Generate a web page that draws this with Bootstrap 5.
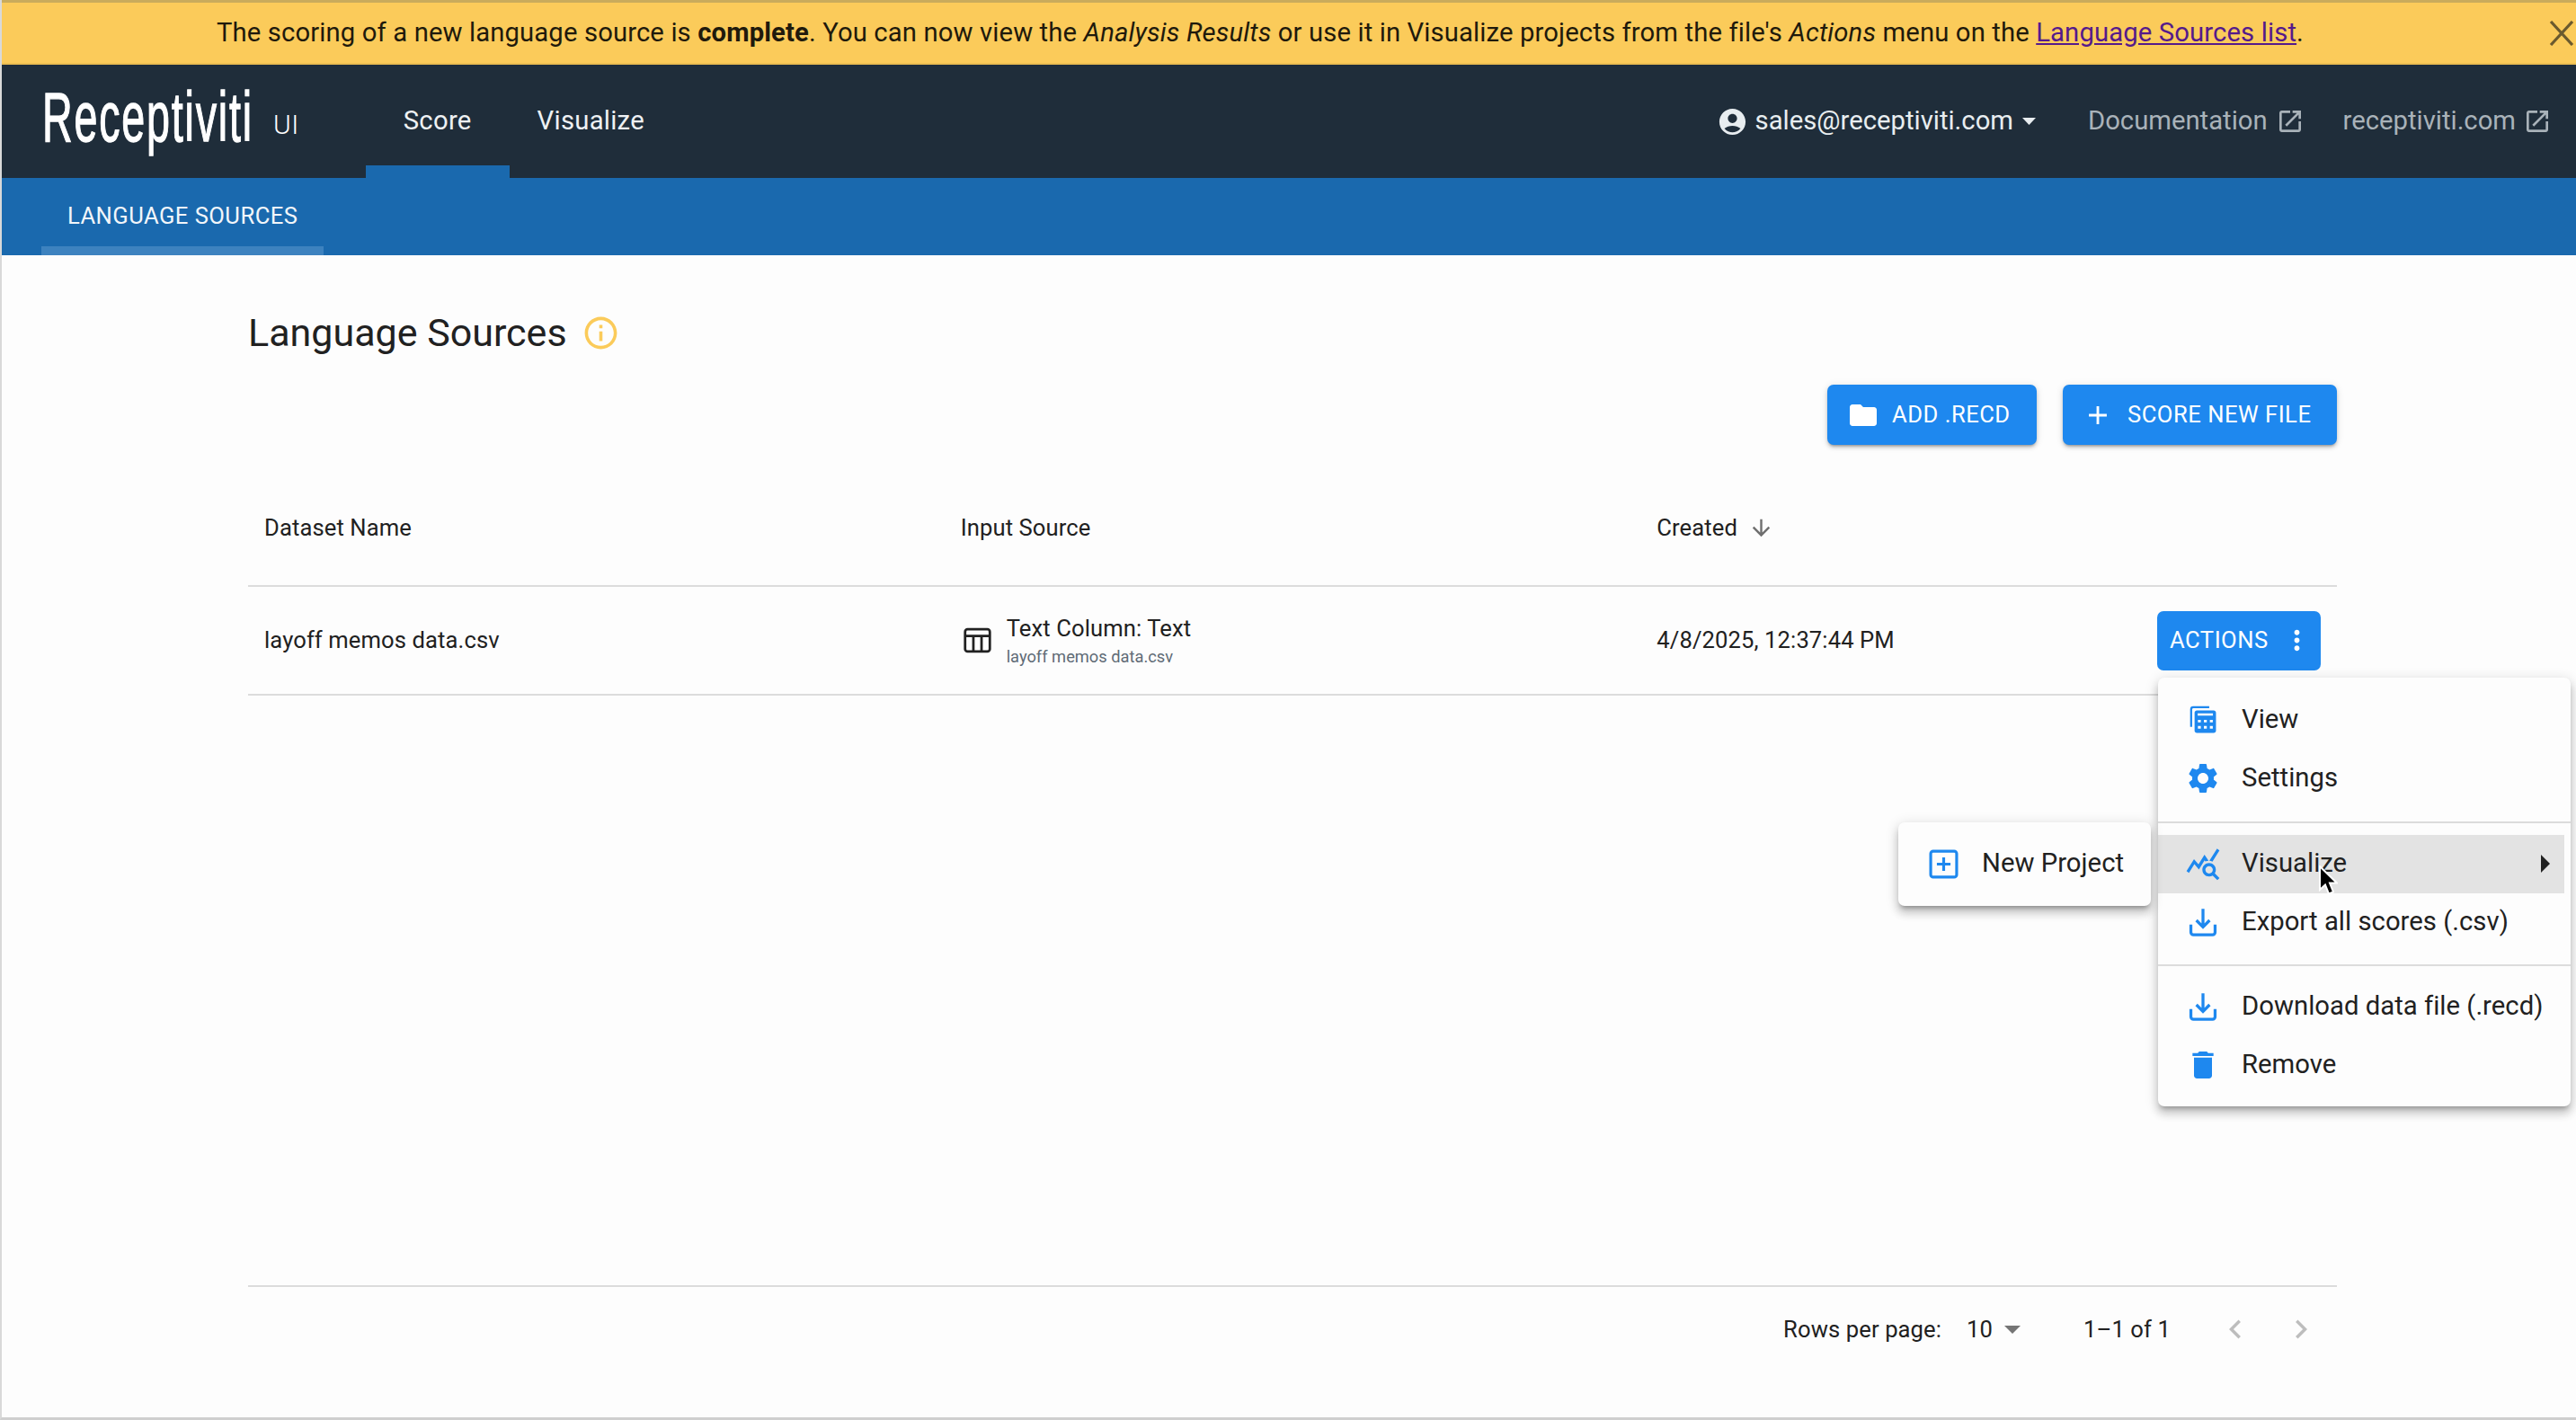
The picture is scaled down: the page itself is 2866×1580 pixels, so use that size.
<!doctype html>
<html lang="en">
<head>
<meta charset="utf-8">
<title>Language Sources</title>
<link href="https://cdn.jsdelivr.net/npm/bootstrap@5.3.0/dist/css/bootstrap.min.css" rel="stylesheet">
<style>
html,body{height:100%;}
body{font-family:Roboto,"Liberation Sans",sans-serif;background:#fdfdfd;color:#212121;font-size:25.6px;letter-spacing:.1px;width:2866px;height:1580px;overflow:hidden;display:flex;flex-direction:column;border-left:2px solid #d9d9d9;border-bottom:3px solid #cfcfcf;}
svg{fill:currentColor;flex:none;display:block;}
.rc-banner{height:72px;background:#fbcb5a;border-top:3px solid #c9ab5c;border-bottom:2px solid #ecbe52;font-size:29.25px;letter-spacing:.12px;color:#1f1a0c;margin-left:-2px;padding-right:62px;}
.rc-banner a{color:#551a8b;}
.rc-close{position:absolute;right:2px;top:20px;background:none;border:0;padding:0;color:#6b5a2e;}
.rc-navbar{height:126px;background:#1f2d3a;margin-left:-2px;padding:0;flex-wrap:nowrap;align-items:stretch;justify-content:flex-start;}
.rc-logo{margin-left:47px;width:237px;color:#fff;font-family:"Liberation Sans",sans-serif;font-size:77px;line-height:1;letter-spacing:3px;transform:scaleX(.605);transform-origin:left center;white-space:nowrap;-webkit-text-stroke:1.3px #fff;padding-bottom:10px;}
.rc-ui{font-size:30px;font-weight:300;color:#fff;margin-left:20px;margin-right:74px;padding-top:7px;letter-spacing:.5px;}
.rc-tab{font-size:29.25px;letter-spacing:.27px;color:#eef1f3;padding:0 30px;display:flex;align-items:center;text-decoration:none;}
.rc-tab-on{padding:0 42px;box-shadow:inset 0 -14px 0 #1a69ae;}
.rc-tab-alt{padding-left:31px;}
.rc-right{padding-right:27px;}
.rc-user{font-size:29.25px;letter-spacing:0;color:#e8edf0;}
.rc-caret{margin-left:10px;}
.rc-ext{font-size:29.25px;letter-spacing:0;color:#a9b2b9;text-decoration:none;}
.rc-ext-doc{margin-left:58px;}
.rc-ext-doc svg{margin-left:9px;}
.rc-ext-site{margin-left:43px;}
.rc-ext-site svg{margin-left:8px;}
.rc-subnav{height:86px;background:#1a69ae;margin-left:-2px;}
.rc-subtab{margin-left:46px;width:314px;padding-left:29px;color:#f2f6fa;font-size:25.6px;letter-spacing:.45px;box-shadow:inset 0 -10px 0 #3d82bf;padding-bottom:2px;display:flex;align-items:center;text-decoration:none;}
.rc-main{padding:60px 266px 0 274px;flex:1 1 auto;display:flex;flex-direction:column;min-height:0;}
.rc-title{font-size:43px;font-weight:400;line-height:52px;margin:0;letter-spacing:0;}
.rc-info{color:#fbcb5a;margin-left:16px;}
.rc-tools{margin-top:32px;gap:29px;}
.rc-primary{background:#1e88ef;border:0;color:#fff;font-size:25.6px;letter-spacing:.5px;border-radius:7px;height:67px;display:flex;align-items:center;text-transform:uppercase;box-shadow:0 3px 3px -2px rgba(0,0,0,.3),0 3px 4px rgba(0,0,0,.14),0 1px 8px rgba(0,0,0,.12);}
.rc-primary:hover,.rc-primary:active{background:#1e88ef;color:#fff;}
.rc-add{width:233px;padding:0 0 0 22px;}
.rc-add svg{margin-right:14px;}
.rc-score{width:305px;padding:0 0 0 22px;}
.rc-score svg{margin-right:16px;}
.rc-actbtn{width:182px;height:66px;padding:0 0 0 14px;box-shadow:none;}
.rc-actbtn svg{margin-left:14px;}
.rc-table{margin:27px 0 0;table-layout:fixed;--bs-table-bg:transparent;--bs-table-color:#212121;--bs-table-border-color:#dcdcdc;font-size:25.6px;}
.rc-table th{font-weight:400;height:130px;vertical-align:middle;padding:2px 18px 0;border-bottom-width:2px;}
.rc-table td{height:121px;vertical-align:middle;padding:0 18px;border-bottom-width:2px;}
.rc-created-arrow{color:#6f6f6f;margin-left:12px;}
.rc-srcicon{margin-right:16px;margin-left:2px;fill:none;stroke:#212121;stroke-width:2;}
.rc-srctext{padding-top:2px;}
.rc-src-main{line-height:31px;}
.rc-src-sub{font-size:18.3px;line-height:24px;margin-top:4px;color:#5f6b76;letter-spacing:0;}
.rc-menuanchor{position:relative;}
.rc-menu{position:absolute;display:block;left:1px;top:74px;width:459px;padding:15px 0 13px;margin:0;border:0;border-radius:7px;background:#fdfdfd;box-shadow:0 5px 5px -3px rgba(0,0,0,.25),0 8px 10px 1px rgba(0,0,0,.14),0 3px 14px 2px rgba(0,0,0,.12);z-index:10;}
.rc-submenu{position:absolute;display:block;left:-288px;top:235px;width:281px;padding:14px 0;margin:0;border:0;border-radius:7px;background:#fdfdfd;box-shadow:0 5px 5px -3px rgba(0,0,0,.3),0 8px 10px 1px rgba(0,0,0,.14),0 3px 14px 2px rgba(0,0,0,.12);}
.rc-item{height:65px;display:flex;align-items:center;padding:0 0 0 33px;font-size:29.25px;letter-spacing:.03px;color:#212121;background:none;}
.rc-item svg{color:#1e88ef;margin-right:26px;}
.rc-ico-lg{margin-left:-3px;}
.rc-item .rc-ico-lg{margin-right:23px;}
.rc-stroke{fill:none;stroke:currentColor;stroke-width:2.3;}
.rc-hover{background:#e3e3e3;margin-right:7px;width:auto;position:relative;}
.rc-hover:hover{background:#e3e3e3;}
.rc-div{margin:14px 0 13px;border-top:2px solid #dcdcdc;opacity:1;}
.rc-div-first{margin-top:15px;}
.rc-item .rc-arrow{position:absolute;right:16px;top:22px;margin:0;color:#212121;}
.rc-sub-item{height:65px;padding-left:34px;}
.rc-cursor{position:absolute;left:178px;top:34px;pointer-events:none;z-index:5;}
.rc-foot{margin-top:auto;height:147px;border-top:2px solid #dcdcdc;font-size:25.6px;padding-bottom:51px;}
.rc-muted{color:#bdbdbd;}
.rc-tri{color:#757575;margin-left:13px;}
.rc-foot-10{margin-left:28px;}
.rc-foot-range{margin-left:70px;}
.rc-prev{margin-left:51px;}
.rc-next{margin-left:31px;margin-right:19px;}
</style>
</head>
<body>
<div class="rc-banner position-relative d-flex align-items-center justify-content-center">
  <div>The scoring of a new language source is <b>complete</b>. You can now view the <i>Analysis Results</i> or use it in Visualize projects from the file's <i>Actions</i> menu on the <a href="#">Language Sources list</a>.</div>
  <button class="rc-close" type="button" aria-label="Close"><svg width="28" height="28" viewBox="0 0 28 28"><path d="M2 1l24 26M26 1L2 27" stroke="currentColor" stroke-width="3.2" fill="none"/></svg></button>
</div>
<nav class="navbar rc-navbar">
  <div class="rc-logo d-flex align-items-center">Receptiviti</div>
  <div class="rc-ui d-flex align-items-center">UI</div>
  <a class="rc-tab rc-tab-on" href="#">Score</a>
  <a class="rc-tab rc-tab-alt" href="#">Visualize</a>
  <div class="rc-right ms-auto d-flex align-items-center">
    <div class="rc-user d-flex align-items-center"><svg width="35" height="35" viewBox="0 0 24 24"><path d="M12 2C6.48 2 2 6.48 2 12s4.48 10 10 10 10-4.48 10-10S17.52 2 12 2zm0 4c1.93 0 3.5 1.57 3.5 3.5S13.93 13 12 13s-3.5-1.57-3.5-3.5S10.07 6 12 6zm0 14c-2.03 0-4.43-.82-6.14-2.88C7.55 15.8 9.68 15 12 15s4.45.8 6.14 2.12C16.43 19.18 14.03 20 12 20z"/></svg><span class="ms-2">sales@receptiviti.com</span><svg class="rc-caret" width="15" height="8" viewBox="0 0 15 8"><path d="M0 0h15L7.5 8z"/></svg></div>
    <a class="rc-ext rc-ext-doc d-flex align-items-center" href="#">Documentation<svg width="32" height="32" viewBox="0 0 24 24"><path d="M19 19H5V5h7V3H5c-1.11 0-2 .9-2 2v14c0 1.1.89 2 2 2h14c1.1 0 2-.9 2-2v-7h-2v7zM14 3v2h3.59l-9.83 9.83 1.41 1.41L19 6.41V10h2V3h-7z"/></svg></a>
    <a class="rc-ext rc-ext-site d-flex align-items-center" href="#">receptiviti.com<svg width="32" height="32" viewBox="0 0 24 24"><path d="M19 19H5V5h7V3H5c-1.11 0-2 .9-2 2v14c0 1.1.89 2 2 2h14c1.1 0 2-.9 2-2v-7h-2v7zM14 3v2h3.59l-9.83 9.83 1.41 1.41L19 6.41V10h2V3h-7z"/></svg></a>
  </div>
</nav>
<div class="rc-subnav d-flex">
  <a class="rc-subtab" href="#">LANGUAGE SOURCES</a>
</div>
<main class="rc-main">
  <div class="d-flex align-items-center">
    <h1 class="rc-title">Language Sources</h1>
    <svg class="rc-info" width="43" height="43" viewBox="0 0 24 24"><path d="M11 7h2v2h-2zm0 4h2v6h-2zm1-9C6.48 2 2 6.48 2 12s4.48 10 10 10 10-4.48 10-10S17.52 2 12 2zm0 18c-4.41 0-8-3.59-8-8s3.59-8 8-8 8 3.59 8 8-3.59 8-8 8z"/></svg>
  </div>
  <div class="rc-tools d-flex justify-content-end">
    <button class="btn rc-primary rc-add" type="button"><svg width="36" height="36" viewBox="0 0 24 24"><path d="M10 4H4c-1.1 0-1.99.9-1.99 2L2 18c0 1.1.9 2 2 2h16c1.1 0 2-.9 2-2V8c0-1.1-.9-2-2-2h-8l-2-2z"/></svg>Add .recd</button>
    <button class="btn rc-primary rc-score" type="button"><svg width="34" height="34" viewBox="0 0 24 24"><path d="M19 13h-6v6h-2v-6H5v-2h6V5h2v6h6v2z"/></svg>Score new file</button>
  </div>
  <table class="table rc-table">
    <thead>
      <tr>
        <th scope="col">Dataset Name</th>
        <th scope="col">Input Source</th>
        <th scope="col"><span class="d-flex align-items-center">Created<svg class="rc-created-arrow" width="29" height="29" viewBox="0 0 24 24"><path d="M20 12l-1.41-1.41L13 16.17V4h-2v12.17l-5.58-5.59L4 12l8 8 8-8z"/></svg></span></th>
      </tr>
    </thead>
    <tbody>
      <tr>
        <td>layoff memos data.csv</td>
        <td>
          <div class="d-flex align-items-center">
            <svg class="rc-srcicon" width="33" height="33" viewBox="0 0 24 24"><rect x="2" y="3" width="20" height="18" rx="2"/><path d="M2 8.5h20M8.7 8.5V21M15.3 8.5V21"/></svg>
            <div class="rc-srctext"><div class="rc-src-main">Text Column: Text</div><div class="rc-src-sub">layoff memos data.csv</div></div>
          </div>
        </td>
        <td>
          <div class="d-flex align-items-center justify-content-between">
            <span>4/8/2025, 12:37:44 PM</span>
            <div class="rc-menuanchor">
              <button class="btn rc-primary rc-actbtn" type="button">Actions<svg width="35" height="35" viewBox="0 0 24 24"><path d="M12 8c1.1 0 2-.9 2-2s-.9-2-2-2-2 .9-2 2 .9 2 2 2zm0 2c-1.1 0-2 .9-2 2s.9 2 2 2 2-.9 2-2-.9-2-2-2zm0 6c-1.1 0-2 .9-2 2s.9 2 2 2 2-.9 2-2-.9-2-2-2z"/></svg></button>
              <ul class="dropdown-menu show rc-menu">
                <li><a class="dropdown-item rc-item" href="#"><svg width="34" height="34" viewBox="0 0 24 24"><path d="M2.7 17.5V3.7a1.6 1.6 0 0 1 1.6-1.6h12.6" fill="none" stroke="currentColor" stroke-width="1.6"/><path fill-rule="evenodd" d="M7.2 4.6h13.2c1 0 1.8.8 1.8 1.8v14c0 1-.8 1.8-1.8 1.8H7.2c-1 0-1.8-.8-1.8-1.8v-14c0-1 .8-1.8 1.8-1.8zm.6 2.2v1.9h12V6.800zM8 12v2h2.300v-2zm4.700 0v2H15v-2zm4.700 0v2h2.300v-2zM8 16.800v2h2.300v-2zm4.700 0v2H15v-2zm4.700 0v2h2.300v-2z"/></svg>View</a></li>
                <li><a class="dropdown-item rc-item" href="#"><svg class="rc-ico-lg" width="40" height="40" viewBox="0 0 24 24"><path d="M19.14 12.94c.04-.3.06-.61.06-.94 0-.32-.02-.64-.07-.94l2.03-1.58c.18-.14.23-.41.12-.61l-1.92-3.32c-.12-.22-.37-.29-.59-.22l-2.39.96c-.5-.38-1.03-.7-1.62-.94l-.36-2.54c-.04-.24-.24-.41-.48-.41h-3.84c-.24 0-.43.17-.47.41l-.36 2.54c-.59.24-1.13.57-1.62.94l-2.39-.96c-.22-.08-.47 0-.59.22L2.74 8.870c-.12.21-.08.47.12.61l2.030 1.580c-.05.3-.09.63-.09.94s.02.64.07.94l-2.030 1.580c-.18.14-.23.41-.12.61l1.920 3.320c.12.22.37.29.59.22l2.390-.96c.5.38 1.030.7 1.620.94l.36 2.540c.05.24.24.41.48.41h3.840c.24 0 .44-.17.47-.41l.36-2.540c.59-.24 1.130-.56 1.620-.94l2.390.96c.22.08.47 0 .59-.22l1.920-3.320c.12-.22.07-.47-.12-.61l-2.010-1.580zM12 15.600c-1.980 0-3.600-1.620-3.600-3.600s1.620-3.600 3.600-3.600 3.600 1.620 3.600 3.600-1.620 3.600-3.600 3.600z"/></svg>Settings</a></li>
                <li><hr class="dropdown-divider rc-div rc-div-first"></li>
                <li class="position-relative"><a class="dropdown-item rc-item rc-hover" href="#"><svg class="rc-ico-lg" width="40" height="40" viewBox="0 0 24 24"><path d="M19.880 18.470c.44-.7.7-1.510.7-2.390 0-2.490-2.010-4.500-4.500-4.500s-4.500 2.010-4.500 4.500 2.010 4.500 4.490 4.500c.88 0 1.700-.26 2.390-.7L21.580 23 23 21.580l-3.120-3.110zm-3.800.11c-1.380 0-2.500-1.120-2.500-2.500s1.120-2.500 2.500-2.500 2.500 1.120 2.500 2.500-1.120 2.500-2.500 2.500zm-.36-8.500c-.74.02-1.450.18-2.100.45l-.55-.83-3.800 6.180-3.010-3.520-3.630 5.810L1 17l5-8 3 3.500L13 6l2.720 4.080zm2.590.5c-.64-.28-1.330-.45-2.050-.49L21.38 2 23 3.180l-4.690 7.400z"/></svg>Visualize<svg class="rc-arrow" width="10" height="20" viewBox="0 0 10 20"><path d="M0 0l10 10L0 20z"/></svg></a>
                  <svg class="rc-cursor" width="22" height="34" viewBox="0 0 22 34"><path d="M2 1v26l6-5.500 4 10 5-2-4-10h8z" fill="#000" stroke="#fff" stroke-width="2"/></svg>
                </li>
                <li><a class="dropdown-item rc-item" href="#"><svg class="rc-stroke" width="34" height="34" viewBox="0 0 24 24"><path d="M12 1.500v14M6.800 10.600l5.200 5.200 5.200-5.200M2.500 14v6a2 2 0 0 0 2 2h15a2 2 0 0 0 2-2v-6"/></svg>Export all scores (.csv)</a></li>
                <li><hr class="dropdown-divider rc-div"></li>
                <li><a class="dropdown-item rc-item" href="#"><svg class="rc-stroke" width="34" height="34" viewBox="0 0 24 24"><path d="M12 1.500v14M6.800 10.600l5.200 5.200 5.200-5.200M2.500 14v6a2 2 0 0 0 2 2h15a2 2 0 0 0 2-2v-6"/></svg>Download data file (.recd)</a></li>
                <li><a class="dropdown-item rc-item" href="#"><svg class="rc-ico-lg" width="40" height="40" viewBox="0 0 24 24"><path d="M6 19c0 1.100.9 2 2 2h8c1.100 0 2-.9 2-2V7H6v12zM19 4h-3.500l-1-1h-5l-1 1H5v2h14V4z"/></svg>Remove</a></li>
              </ul>
              <ul class="dropdown-menu show rc-submenu">
                <li><a class="dropdown-item rc-item rc-sub-item" href="#"><svg class="rc-stroke" width="33" height="33" viewBox="0 0 24 24"><rect x="1.500" y="1.500" width="21" height="21" rx="2"/><path d="M12 6.500v11M6.500 12h11"/></svg>New Project</a></li>
              </ul>
            </div>
          </div>
        </td>
      </tr>
    </tbody>
  </table>
  <footer class="rc-foot d-flex align-items-center justify-content-end">
    <span>Rows per page:</span>
    <span class="rc-foot-10">10</span>
    <svg class="rc-tri" width="18" height="9" viewBox="0 0 18 9"><path d="M0 0h18L9 9z"/></svg>
    <span class="rc-foot-range">1–1 of 1</span>
    <svg class="rc-muted rc-prev" width="42" height="42" viewBox="0 0 24 24"><path d="M15.410 7.410L14 6l-6 6 6 6 1.410-1.410L10.830 12z"/></svg>
    <svg class="rc-muted rc-next" width="42" height="42" viewBox="0 0 24 24"><path d="M10 6L8.590 7.410 13.170 12l-4.580 4.590L10 18l6-6z"/></svg>
  </footer>
</main>
<script src="https://cdn.jsdelivr.net/npm/bootstrap@5.3.0/dist/js/bootstrap.bundle.min.js"></script>
</body>
</html>
